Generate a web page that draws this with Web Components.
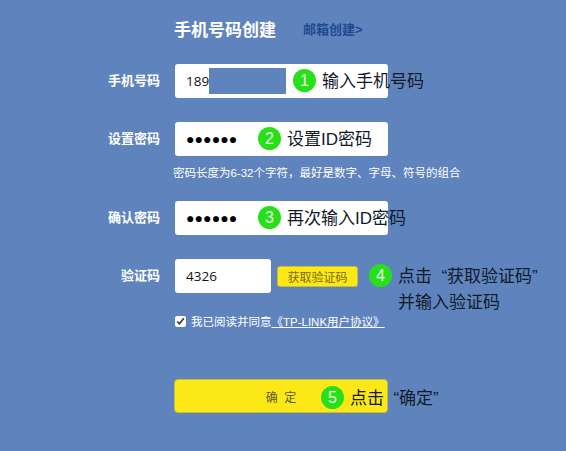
<!DOCTYPE html>
<html lang="zh">
<head>
<meta charset="utf-8">
<title>手机号码创建</title>
<style>
  html, body { margin: 0; height: 100%; }
  body {
    background: #5f84bd;
    font-family: "Liberation Sans", "Noto Sans CJK SC", sans-serif;
    overflow: hidden;
  }
</style>
</head>
<body>

<template id="form-row-template">
  <style>
    :host {
      display: flex;
      align-items: center;
      height: 34px;
      position: relative;
    }
    .label {
      width: 160px;
      padding-bottom: 3px;
      text-align: right;
      font-size: 13px;
      font-weight: bold;
      color: #fff;
      flex: none;
    }
    .body {
      margin-left: 15px;
      display: flex;
      align-items: center;
    }
  </style>
  <div class="label"><slot name="label"></slot></div>
  <div class="body"><slot></slot></div>
</template>

<template id="text-box-template">
  <style>
    :host {
      display: flex;
      align-items: center;
      box-sizing: border-box;
      width: 213px;
      height: 34px;
      padding-left: 11px;
      background: #fff;
      border-radius: 3px;
      font-family: "Open Sans", sans-serif;
      font-size: 13.5px;
      color: #111;
    }
    :host([short]) { width: 96px; }
    :host([secret]) {
      font-family: "Liberation Sans", "Noto Sans CJK SC", sans-serif;
      font-size: 14px;
      letter-spacing: 0.1px;
      color: #000;
    }
  </style>
  <slot></slot>
</template>

<template id="step-note-template">
  <style>
    :host {
      display: flex;
      align-items: flex-start;
      position: absolute;
      left: var(--x);
      top: var(--y);
      font-size: 17px;
      line-height: 26px;
      color: #111a28;
      white-space: nowrap;
    }
    .num {
      flex: none;
      width: 23px;
      height: 23px;
      margin: 2px 6px 0 0;
      border-radius: 50%;
      background: #27e01a;
      color: #e8ffe6;
      font-size: 16px;
      line-height: 23px;
      text-align: center;
    }
    .text { padding-top: 1.5px; }
  </style>
  <div class="num"></div>
  <div class="text"><slot></slot></div>
</template>

<template id="yellow-button-template">
  <style>
    :host {
      display: flex;
      align-items: center;
      justify-content: center;
      box-sizing: border-box;
      background: #fde817;
      border: 1px solid #c9bb3a;
      border-radius: 3px;
      color: #7a6c12;
      font-size: 12px;
      cursor: pointer;
    }
    :host([wide]) {
      width: 214px;
      height: 34px;
      margin-left: 174px;
      border-radius: 4px;
      color: #5e5a2a;
      word-spacing: 3px;
    }
    :host([small]) {
      width: 81px;
      height: 21px;
      margin-left: 6px;
    }
  </style>
  <slot></slot>
</template>

<template id="signup-form-template">
  <style>
    :host {
      display: block;
      position: relative;
      height: 451px;
      color: #fff;
    }
    .tabs {
      display: flex;
      align-items: center;
      height: 56px;
      padding: 0 0 4px 174px;
    }
    .tabs h1 {
      margin: 0;
      font-size: 17px;
      font-weight: bold;
    }
    .tabs a {
      margin-left: 27px;
      font-size: 13px;
      font-weight: bold;
      color: #1f4a8f;
    }
    .fields {
      padding-top: 4px;
    }
    ::slotted(form-row) { margin-bottom: 24px; }
    .mask {
      position: absolute;
      left: 209px;
      top: 68px;
      width: 77px;
      height: 26px;
      background: #5f84bd;
    }
    .hint {
      margin: -23px 0 0 173px;
      height: 44px;
      font-size: 11.5px;
      line-height: 32px;
    }
    .agree {
      display: flex;
      align-items: center;
      margin: -3px 0 0 175px;
      font-size: 11.5px;
      height: 14px;
    }
    .agree input {
      width: 11px;
      height: 11px;
      margin: 0 5px 0 0;
      accent-color: #fff;
    }
    .agree a { color: #fff; text-decoration: underline; }
    .submit { margin-top: 51px; }
  </style>
  <div class="tabs"><h1>手机号码创建</h1><a>邮箱创建&gt;</a></div>
  <div class="fields"><slot name="phone"></slot><slot name="pass"></slot></div>
  <div class="hint">密码长度为6-32个字符，最好是数字、字母、符号的组合</div>
  <slot name="confirm"></slot>
  <slot name="code"></slot>
  <div class="agree"><input type="checkbox" checked><span>我已阅读并同意<a>《TP-LINK用户协议》</a></span></div>
  <div class="submit"><slot name="submit"></slot></div>
  <div class="mask"></div>
  <slot name="notes"></slot>
</template>

<signup-form>
  <form-row slot="phone"><span slot="label">手机号码</span><text-box>189</text-box></form-row>
  <form-row slot="pass"><span slot="label">设置密码</span><text-box secret>●●●●●●</text-box></form-row>
  <form-row slot="confirm"><span slot="label">确认密码</span><text-box secret>●●●●●●</text-box></form-row>
  <form-row slot="code"><span slot="label">验证码</span><text-box short>4326</text-box><yellow-button small>获取验证码</yellow-button></form-row>
  <yellow-button slot="submit" wide>确 定</yellow-button>

  <step-note slot="notes" num="1" style="--x:293px;--y:67px">输入手机号码</step-note>
  <step-note slot="notes" num="2" style="--x:258px;--y:125px">设置ID密码</step-note>
  <step-note slot="notes" num="3" style="--x:258px;--y:204px">再次输入ID密码</step-note>
  <step-note slot="notes" num="4" style="--x:369px;--y:262px">点击&nbsp; “获取验证码”<br>并输入验证码</step-note>
  <step-note slot="notes" num="5" style="--x:321px;--y:384px">点击&nbsp; “确定”</step-note>
</signup-form>

<script>
  function shadowFrom(el, id) {
    const root = el.attachShadow({mode: 'open'});
    root.appendChild(document.getElementById(id).content.cloneNode(true));
    return root;
  }

  class SignupForm extends HTMLElement {
    constructor() { super(); shadowFrom(this, 'signup-form-template'); }
  }
  class FormRow extends HTMLElement {
    constructor() { super(); shadowFrom(this, 'form-row-template'); }
  }
  class TextBox extends HTMLElement {
    constructor() { super(); shadowFrom(this, 'text-box-template'); }
  }
  class YellowButton extends HTMLElement {
    constructor() { super(); shadowFrom(this, 'yellow-button-template'); }
  }
  class StepNote extends HTMLElement {
    constructor() { super(); shadowFrom(this, 'step-note-template'); }
    connectedCallback() {
      this.shadowRoot.querySelector('.num').textContent = this.getAttribute('num');
    }
  }

  customElements.define('signup-form', SignupForm);
  customElements.define('form-row', FormRow);
  customElements.define('text-box', TextBox);
  customElements.define('yellow-button', YellowButton);
  customElements.define('step-note', StepNote);
</script>
</body>
</html>
